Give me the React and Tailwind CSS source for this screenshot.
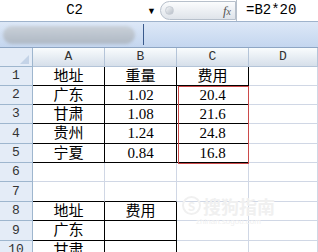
import React from "react";

const rows = [
  ["地址", "重量", "费用"],
  ["广东", "1.02", "20.4"],
  ["甘肃", "1.08", "21.6"],
  ["贵州", "1.24", "24.8"],
  ["宁夏", "0.84", "16.8"],
  ["", "", ""],
  ["", "", ""],
  ["地址", "费用", ""],
  ["广东", "", ""],
  ["甘肃", "", ""],
];

const heights = ["h-[19px]", "h-[19px]", "h-[19px]", "h-[20px]", "h-[19px]", "h-[19px]", "h-[20px]", "h-[19px]", "h-[20px]", "h-[19px]"];

const cjk = { fontFamily: '"Liberation Serif", "Noto Sans CJK SC", serif' };
const mono = { fontFamily: '"Liberation Mono", "DejaVu Sans Mono", monospace' };

function isTable(r, c) {
  if (r <= 4 && c <= 2) return true;
  if (r >= 7 && c <= 1) return true;
  return false;
}

export default function App() {
  return (
    <div className="w-[318px] h-[252px] overflow-hidden bg-white relative">
      {/* formula bar */}
      <div className="h-[22px] flex border-b border-[#9fb3cc] bg-white">
        <div className="w-[160px] flex items-center relative">
          <span className="flex-1 text-center text-[14px] text-black pl-[2px]" style={mono}>C2</span>
          <span className="text-[9px] mr-[4px] text-black">▼</span>
        </div>
        <div className="w-[76px] my-[1px] rounded-l-full border border-[#b7c0cb] bg-gradient-to-b from-[#fbfcfd] to-[#dfe4ea] flex items-center justify-between pl-[4px] pr-[4px]">
          <span className="w-[9px] h-[9px] rounded-full bg-gradient-to-br from-[#f4f6f8] to-[#b7bec7] border border-[#c6ccd4]" />
          <span className="italic text-[13px] text-[#555]" style={{ fontFamily: '"Liberation Serif", serif' }}>
            f<span className="text-[10px]">x</span>
          </span>
        </div>
        <div className="flex-1 border-l border-[#b7c0cb] flex items-center pl-[9px] text-[14px] text-black" style={mono}>
          =B2*20
        </div>
      </div>
      {/* blurred band */}
      <div className="h-[26px] bg-gradient-to-b from-[#dde8f7] to-[#c4d6ef] flex items-center relative border-b border-[#8ea6c4]">
        <div className="ml-[3px] w-[132px] h-[18px] rounded-full bg-gradient-to-b from-[#c9d0d8] to-[#aeb8c4] blur-[1.5px]" />
        <div className="ml-[8px] w-[1px] h-[21px] bg-[#3a5a8c]" />
      </div>
      {/* grid */}
      <div className="grid grid-cols-[33px_72px_72px_72px_1fr]">
        {/* header row */}
        <div className="h-[19px] bg-[#e4ecf7] border-r border-b border-[#9eb6ce] flex items-end justify-end pr-[3px] pb-[2px]">
          <div className="w-0 h-0 border-l-[9px] border-l-transparent border-b-[9px] border-b-[#c4d3e7]" />
        </div>
        {["A", "B", "C", "D"].map((l) => (
          <div
            key={l}
            className="h-[19px] bg-gradient-to-b from-[#f9fcfd] to-[#d6dfea] border-r border-b border-[#b4c4d8] flex items-center justify-center text-[13px] text-[#333]"
            style={mono}
          >
            {l}
          </div>
        ))}
        {rows.map((row, r) => (
          <React.Fragment key={r}>
            <div
              className={
                heights[r] +
                " bg-[#e4ecf7] border-r border-b border-[#9eb6ce] flex items-center justify-center text-[13px] text-[#333]"
              }
              style={mono}
            >
              {r + 1}
            </div>
            {[0, 1, 2, 3].map((c) => {
              const txt = row[c] || "";
              const inT = isTable(r, c);
              const belowT = isTable(r + 1, c);
              const rightBlack = inT;
              const bottomBlack = inT || belowT;
              return (
                <div
                  key={c}
                  className={
                    heights[r] +
                    " border-r border-b flex items-center justify-center text-black text-[15px] " +
                    (rightBlack ? "border-r-black " : "border-r-[#d0d7e5] ") +
                    (bottomBlack ? "border-b-black" : "border-b-[#d0d7e5]")
                  }
                  style={cjk}
                >
                  {txt}
                </div>
              );
            })}
          </React.Fragment>
        ))}
      </div>
      {/* red range border C2:C5 */}
      <div className="absolute left-[178px] top-[86px] w-[71px] h-[78px] border border-[#cc4a4a]" />
      {/* watermark */}
      <div className="absolute left-[182px] top-[196px] flex flex-col items-center text-[#f0f0f0] leading-none">
        <div className="flex items-center gap-[2px] text-[18px] font-bold" style={{ fontFamily: '"Noto Sans CJK SC", sans-serif' }}>
          <span className="w-[19px] h-[19px] rounded-full border-2 border-[#f0f0f0] flex items-center justify-center text-[12px]">S</span>
          搜狗指南
        </div>
        <div className="text-[8px] mt-[3px]" style={{ fontFamily: '"Liberation Sans", sans-serif' }}>zhinan.sogou.com</div>
      </div>
    </div>
  );
}
